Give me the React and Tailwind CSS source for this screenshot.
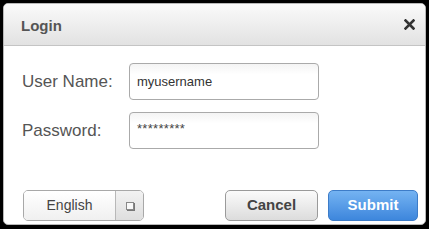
export default function App() {
  const font = { fontFamily: '"Liberation Sans", Arial, sans-serif' };
  return (
    <div className="w-[429px] h-[229px] bg-black pt-[3px] pl-[3px]" style={font}>
      <div className="w-[423px] h-[222px] bg-white rounded-[5px] border border-[#b8b8b8] flex flex-col overflow-hidden">
        <div className="h-[42px] shrink-0 flex items-center justify-between pl-[17px] pr-[10px] border-b border-[#c4c4c4] bg-gradient-to-b from-[#fafafa] to-[#e2e2e2]">
          <span className="text-[15px] font-bold text-[#555] pt-[4px]">Login</span>
          <svg width="11" height="11" viewBox="0 0 11 11">
            <path d="M1.5 1.5 L9.5 9.5 M9.5 1.5 L1.5 9.5" stroke="#333" strokeWidth="2.6" strokeLinecap="square" />
          </svg>
        </div>
        <div className="flex flex-col gap-[12px] pt-[17px] pl-[18px]">
          <div className="flex items-center">
            <span className="w-[107px] text-[17px] text-[#555]">User Name:</span>
            <div className="w-[190px] h-[37px] rounded-[4px] border border-[#aaa] bg-gradient-to-b from-[#f4f4f4] to-white to-[30%] flex items-center pl-[7px] text-[13px] text-[#333]">
              myusername
            </div>
          </div>
          <div className="flex items-center">
            <span className="w-[107px] text-[17px] text-[#555]">Password:</span>
            <div className="w-[190px] h-[37px] rounded-[4px] border border-[#aaa] bg-gradient-to-b from-[#f4f4f4] to-white to-[30%] flex items-center pl-[7px] pb-[4px] text-[13px] text-[#444] tracking-[0.3px]">
              *********
            </div>
          </div>
        </div>
        <div className="mt-auto flex items-center pl-[19px] pr-[7px] pb-[3px]">
          <div className="w-[121px] h-[31px] flex rounded-[5px] border border-[#a8a8a8] overflow-hidden">
            <div className="w-[92px] flex items-center justify-center text-[14px] text-[#444] bg-gradient-to-b from-white to-[#f0f0f0] border-r border-[#b8b8b8]">
              English
            </div>
            <div className="flex-1 flex items-center justify-center bg-gradient-to-b from-[#f2f2f2] to-[#dedede]">
              <div className="w-[8px] h-[8px] border border-[#888] bg-[#f8f8f8] shadow-[1px_1px_0_#777]" />
            </div>
          </div>
          <div className="ml-auto w-[93px] h-[31px] rounded-[5px] border border-[#9a9a9a] bg-gradient-to-b from-[#fbfbfb] to-[#dcdcdc] flex items-center justify-center text-[15px] font-bold text-[#444]">
            Cancel
          </div>
          <div className="ml-[10px] w-[90px] h-[31px] rounded-[5px] border border-[#3d7cc8] bg-gradient-to-b from-[#74b3f2] to-[#3d86dc] flex items-center justify-center text-[15px] font-bold text-white">
            Submit
          </div>
        </div>
      </div>
    </div>
  );
}
